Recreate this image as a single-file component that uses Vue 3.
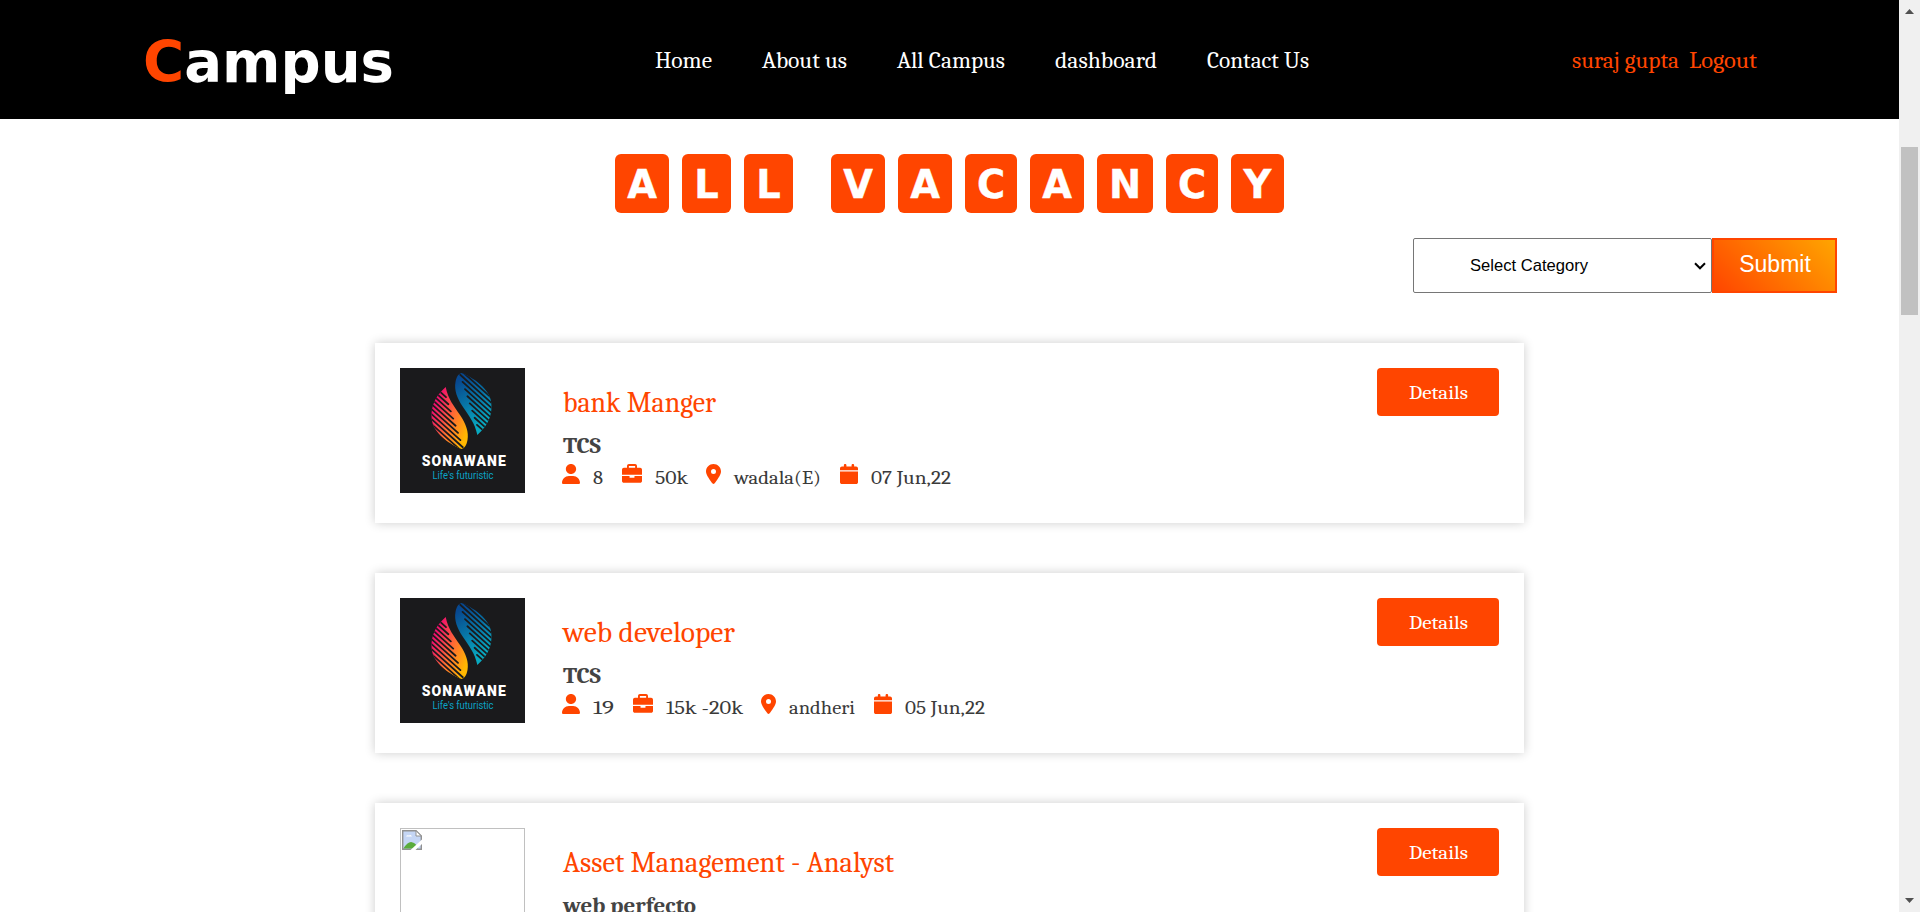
<script setup>
const links = [
  { label: 'Home', w: 57 },
  { label: 'About us', w: 85 },
  { label: 'All Campus', w: 108 },
  { label: 'dashboard', w: 102 },
  { label: 'Contact Us', w: 102 },
]
const words = ['ALL', 'VACANCY']
const tileWidth = { A: 54, L: 49, V: 54, C: 52, N: 56, Y: 53 }
const icons = {
  user: { box: '0 0 448 512', w: 18, d: 'M224 256c70.700 0 128-57.300 128-128S294.700 0 224 0 96 57.300 96 128s57.300 128 128 128zm50.700 48H173.300C77.600 304 0 381.600 0 477.300 0 496.500 15.500 512 34.700 512h378.600c19.200 0 34.700-15.500 34.700-34.700C448 381.600 370.400 304 274.700 304z' },
  case: { box: '0 0 512 512', w: 20, d: 'M320 336c0 8.800-7.200 16-16 16h-96c-8.800 0-16-7.200-16-16v-32H0v128c0 25.600 22.400 48 48 48h416c25.600 0 48-22.400 48-48V304H320v32zM464 96h-80V48c0-25.600-22.400-48-48-48H176c-25.600 0-48 22.400-48 48v48H48c-25.600 0-48 22.400-48 48v128h512V144c0-25.600-22.400-48-48-48zm-128 0H176V48h160v48z' },
  pin: { box: '0 0 384 512', w: 15, d: 'M384 192c0 87.400-117 243-168.300 307.200-12.300 15.300-35.100 15.300-47.400 0C117 435 0 279.400 0 192 0 86 86 0 192 0s192 86 192 192zM192 256a64 64 0 1 0 0-128 64 64 0 0 0 0 128z' },
  cal: { box: '0 0 448 512', w: 18, d: 'M96 32C96 14.300 110.300 0 128 0s32 14.300 32 32v32h128V32c0-17.700 14.300-32 32-32s32 14.300 32 32v32h48c26.500 0 48 21.500 48 48v48H0v-48c0-26.500 21.500-48 48-48h48V32zM448 192v272c0 26.500-21.500 48-48 48H48c-26.500 0-48-21.500-48-48V192h448z' },
}
const jobs = [
  {
    title: 'bank Manger', w: 153, company: 'TCS', cw: 38, logo: true,
    meta: [['user', '8', 10], ['case', '50k', 33], ['pin', 'wadala(E)', 87], ['cal', '07 Jun,22', 80]],
  },
  {
    title: 'web developer', w: 172, company: 'TCS', cw: 38, logo: true,
    meta: [['user', '19', 21], ['case', '15k -20k', 77], ['pin', 'andheri', 66], ['cal', '05 Jun,22', 80]],
  },
  { title: 'Asset Management - Analyst', w: 331, company: 'web perfecto', cw: 133, logo: false, meta: [] },
]
const stripes = Array.from({ length: 12 }, (_, i) => i * 5)
</script>

<template>
  <div class="page">
    <div class="content">
      <header>
        <div class="brand"><svg width="260" height="76"><text x="0" y="56.500" textLength="251" lengthAdjust="spacingAndGlyphs"><tspan class="hot">C</tspan>ampus</text></svg></div>
        <nav>
          <a v-for="l in links" :key="l.label"><svg :width="l.w" height="30"><text y="22" :textLength="l.w" lengthAdjust="spacingAndGlyphs">{{ l.label }}</text></svg></a>
        </nav>
        <div class="account">
          <svg width="107" height="30"><text y="22" textLength="107" lengthAdjust="spacingAndGlyphs">suraj gupta</text></svg>
          <svg width="68" height="30"><text y="22" textLength="68" lengthAdjust="spacingAndGlyphs">Logout</text></svg>
        </div>
      </header>

      <h1>
        <span v-for="w in words" :key="w" class="word">
          <span v-for="(c, i) in w" :key="i" class="tile" :style="{ width: tileWidth[c] + 'px' }">{{ c }}</span>
        </span>
      </h1>

      <form class="filter" @submit.prevent>
        <div class="select">
          <span>Select Category</span>
          <svg width="12" height="8" viewBox="0 0 12 8"><path d="M1 1.300l5 5 5-5" fill="none" stroke="#000" stroke-width="2" /></svg>
        </div>
        <button type="submit">Submit</button>
      </form>

      <main>
        <article v-for="(job, n) in jobs" :key="job.title" class="card">
          <svg v-if="job.logo" class="thumb" viewBox="0 0 125 125">
            <defs>
              <linearGradient :id="'warm' + n" gradientUnits="userSpaceOnUse" x1="32" y1="44" x2="69" y2="60">
                <stop offset="0" stop-color="#f0106c" /><stop offset=".5" stop-color="#ff6a35" /><stop offset="1" stop-color="#ffb800" />
              </linearGradient>
              <linearGradient :id="'cool' + n" gradientUnits="userSpaceOnUse" x1="56" y1="14" x2="84" y2="56">
                <stop offset="0" stop-color="#07478f" /><stop offset="1" stop-color="#08a9c0" />
              </linearGradient>
              <path :id="'leaf' + n" d="M45.700 19C48 31 54 38 60 47C66 56 69 64 67.500 72C66.500 77 65 80 61.500 81C51 77 36 67 32.500 55C29.500 43 33 30 45.700 19Z" />
              <clipPath :id="'clip' + n"><use :href="'#leaf' + n" /></clipPath>
              <g :id="'lines' + n" :clip-path="`url(#clip${n})`" stroke="#1a1a1c" stroke-width="1.800" stroke-linecap="round">
                <line v-for="(s, i) in stripes" :key="i" x1="27" :y1="12 + s" :x2="Math.min(64, 46 + i * 2.4)" :y2="12 + s + (Math.min(64, 46 + i * 2.4) - 27) * 0.9" />
              </g>
            </defs>
            <rect width="125" height="125" fill="#1a1a1c" />
            <use :href="'#leaf' + n" :fill="`url(#warm${n})`" />
            <use :href="'#lines' + n" />
            <path d="M77.300 67C75 55 69 48 63 39C57 30 54 22 55.500 14C56.500 9 58 6 61.500 5C72 9 87 19 90.500 31C93.500 43 90 56 77.300 67Z" :fill="`url(#cool${n})`" />
            <use :href="'#lines' + n" transform="rotate(180 61.500 43)" />
            <text class="name" x="21.800" y="98.300" textLength="84" lengthAdjust="spacing">SONAWANE</text>
            <text class="motto" x="32.500" y="110.600" textLength="61" lengthAdjust="spacingAndGlyphs">Life's futuristic</text>
          </svg>
          <div v-else class="thumb missing">
            <svg width="20" height="20" viewBox="0 0 20 20">
              <path d="M.700.700H14L19.300 6V19.300H.700Z" fill="#c5d6f5" stroke="#919191" stroke-width="1.400" />
              <path d="M4 6.500q1-2 3-1 2-1.500 3 1z" fill="#fff" />
              <path d="M1.400 18.600Q8 7 15 15.500L16 18.600Z" fill="#5aac3c" />
              <path d="M14 .700V6h5.300z" fill="#fff" stroke="#919191" />
              <path d="M8.500 20L20 9.500V14L13.500 20Z" fill="#fff" />
            </svg>
          </div>
          <div class="info">
            <h2><svg :width="job.w" height="40"><text y="29" :textLength="job.w" lengthAdjust="spacingAndGlyphs">{{ job.title }}</text></svg></h2>
            <h3><svg :width="job.cw" height="24"><text y="19" :textLength="job.cw" lengthAdjust="spacingAndGlyphs">{{ job.company }}</text></svg></h3>
            <ul>
              <li v-for="m in job.meta" :key="m[0]">
                <svg class="icon" :width="icons[m[0]].w" :viewBox="icons[m[0]].box" preserveAspectRatio="none"><path :d="icons[m[0]].d" fill-rule="evenodd" /></svg>
                <svg :width="m[2]" height="28"><text y="19.500" :textLength="m[2]" lengthAdjust="spacingAndGlyphs">{{ m[1] }}</text></svg>
              </li>
            </ul>
          </div>
          <a class="details"><svg width="59" height="30"><text y="22" textLength="59" lengthAdjust="spacingAndGlyphs">Details</text></svg></a>
        </article>
      </main>
    </div>
    <div class="scroll">
      <svg width="9" height="5"><path d="M0 5L4.500 0L9 5Z" fill="#505050" /></svg>
      <div class="thumbbar"></div>
      <svg class="down" width="9" height="5"><path d="M0 0L4.500 5L9 0Z" fill="#505050" /></svg>
    </div>
  </div>
</template>

<style>
body { margin: 0; overflow: hidden; }
</style>

<style scoped>
.page { display: flex; height: 912px; overflow: hidden; background: #fff; font-family: Cambria, "DejaVu Serif Condensed", "DejaVu Serif", serif; }
.content { width: 1899px; }
svg { display: block; overflow: visible; flex: none; }
header { height: 119px; background: #000; display: flex; align-items: flex-start; color: #fff; }
header svg { fill: #fff; }
.brand { width: 655px; padding: 25px 0 0 143px; box-sizing: border-box; height: 119px; flex: none; font: bold 57px Verdana, "DejaVu Sans", sans-serif; }
.hot { fill: #ff4500; }
nav { display: flex; gap: 50px; padding-top: 46px; font-size: 22.400px; }
.account { margin-left: auto; padding: 46px 142px 0 0; display: flex; gap: 10px; font-size: 22.400px; }
.account svg { fill: #ff4500; }
h1 { margin: 35px 0 0; display: flex; justify-content: center; gap: 38px; font: bold 38.400px Verdana, "DejaVu Sans", sans-serif; }
.word { display: flex; gap: 13px; }
.tile { height: 59px; line-height: 61px; border-radius: 6px; background: #ff4500; color: #fff; text-align: center; -webkit-text-stroke: .4px #fff; }
.filter { display: flex; margin: 25px 62px 0 0; justify-content: flex-end; height: 55px; font-family: Arial, "Liberation Sans", sans-serif; }
.select { width: 299px; box-sizing: border-box; border: 1px solid #767676; border-radius: 2px; padding: 0 5px 0 56px; display: flex; align-items: center; justify-content: space-between; font-size: 16.600px; color: #000; }
button { width: 125px; box-sizing: border-box; border: 2px solid #ff4500; padding: 0 0 2px 1px; background: linear-gradient(45deg, #ff4500, #ffa500); color: #fff; font: 23px Arial, "Liberation Sans", sans-serif; }
main { display: flex; flex-direction: column; gap: 50px; width: 1149px; margin: 50px 0 0 375px; }
.card { height: 180px; box-sizing: border-box; padding: 25px; display: flex; align-items: flex-start; background: #fff; box-shadow: 0 0 10px rgba(0, 0, 0, .2); }
.thumb { width: 125px; height: 125px; flex: none; box-sizing: border-box; }
.missing { border: 1px solid #c0c0c0; padding: 1px; }
.name { font: 900 14px Roboto, sans-serif; fill: #fff; }
.motto { font: 10.800px Roboto, sans-serif; fill: #0ba3c6; }
.info { margin-left: 37.500px; padding-top: 15px; }
h2, h3 { margin: 0; }
h2 { font-size: 28.800px; font-weight: normal; fill: #ff4500; }
h3 { margin-top: 11px; font-size: 22.400px; fill: #444; }
ul { list-style: none; margin: 6px 0 0 -.5px; padding: 0; display: flex; gap: 18.500px; font-size: 19.200px; fill: #3a3a3a; }
li { display: flex; gap: 13px; }
.icon { height: 20px; fill: #ff4500; }
.details { margin-left: auto; width: 122px; height: 48px; border-radius: 4px; background: #ff4500; display: flex; justify-content: center; padding-top: 8.500px; box-sizing: border-box; font-size: 19.200px; fill: #fff; }
.scroll { width: 21px; background: #f0f0f0; display: flex; flex-direction: column; align-items: center; padding: 9px 0; box-sizing: border-box; }
.thumbbar { width: 17px; height: 168px; margin-top: 133px; background: #c1c1c1; }
.down { margin-top: auto; }
</style>
